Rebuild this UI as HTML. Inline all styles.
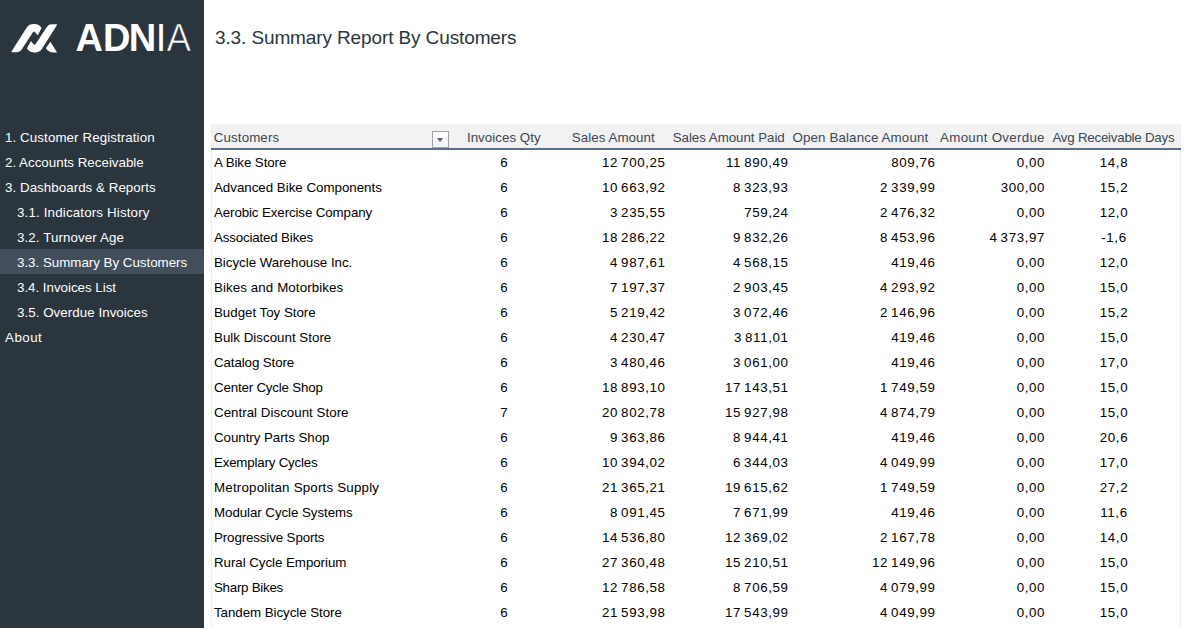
<!DOCTYPE html>
<html lang="en"><head><meta charset="utf-8"><title>3.3. Summary Report By Customers</title>
<style>
*{box-sizing:border-box;margin:0;padding:0}
html,body{width:1192px;height:633px;overflow:hidden;background:#fff}
body{position:relative;font-family:"Liberation Sans",sans-serif;font-size:13.33px;color:#000}
#side{position:absolute;left:0;top:0;width:204px;height:628px;background:#2a353e}
#logo{position:absolute;left:0;top:0;width:204px;height:80px}
.nav{position:absolute;left:0;width:204px;height:25px;line-height:25px;color:#fff;white-space:nowrap}
.nav.l0{padding-left:5px}
.nav.l1{padding-left:17px}
.selbg{position:absolute;left:0;width:204px;height:25px;background:#424e5b}
#title{position:absolute;left:215px;top:25px;font-size:19px;line-height:26px;color:#2a353e;white-space:nowrap}
#tbl{position:absolute;left:211px;top:124px;width:970px;height:504px;border-left:1px solid #eceef1;border-right:1px solid #eef0f2}
#hd{position:absolute;left:-1px;top:0;width:970px;height:26px;background:#f2f2f2;border-bottom:2px solid #5b6e8b}
.r{position:absolute;left:-1px;width:970px;height:25px}
.c{position:absolute;top:0;height:25px;line-height:25px;white-space:nowrap}
.hc{top:1px;color:#3b4656}
.c0{left:3px}
.c1{left:256px;width:74px;text-align:center}
.n{text-align:right;letter-spacing:.6px;word-spacing:-1.3px}
.c2{right:515.5px}
.c3{right:392.5px}
.c4{right:245.5px}
.c5{right:136px}
.c6{left:837px;width:132px;text-align:center;letter-spacing:.6px}
#dd{position:absolute;left:220px;top:7px;width:17px;height:17px;border:1px solid #a2a2a2;background:linear-gradient(#fff,#eef1f6)}
#dd:after{content:"";position:absolute;left:4px;top:6px;border-left:3.5px solid transparent;border-right:3.5px solid transparent;border-top:4px solid #606060}
</style></head>
<body>
<div id="side">
<svg id="logo" viewBox="0 0 204 80" width="204" height="80">
<g fill="#fff">
<path d="M11.6 51.3 L26.75 27.4 A8 6 0 0 1 41.6 28.1 L37.7 35.5 L35 32.2 Q34.3 31.1 33.1 32.1 L22.5 48.3 C21.3 50.2 19.8 52.2 17 52.2 L12.6 52.2 Q11 52.2 11.6 51.3 Z"/>
<path d="M11.6 51.3 L26.75 27.4 A8 6 0 0 1 41.6 28.1 L37.7 35.5 L35 32.2 Q34.3 31.1 33.1 32.1 L22.5 48.3 C21.3 50.2 19.8 52.2 17 52.2 L12.6 52.2 Q11 52.2 11.6 51.3 Z" transform="rotate(180 34.3 38.2)"/>
<path d="M50.4 41.8 L56.7 51.7 C57.1 52.4 56.6 52.6 56 52.6 L52.5 52.6 C49.5 52.4 47 50.5 46 48.1 Z"/>
</g>
<text style="font-family:'Liberation Sans',sans-serif;font-weight:700;font-size:38px" fill="#fff" y="51.3" x="75.6 103 128.7">ADN</text>
<text style="font-family:'Liberation Sans',sans-serif;font-weight:400;font-size:38px" fill="#fff" y="51.3"><tspan x="155.8">I</tspan><tspan x="166.6" textLength="24.6" lengthAdjust="spacingAndGlyphs" stroke="#2a353e" stroke-width="0.7">A</tspan></text>
</svg>

<div class="nav l0" style="top:125px;letter-spacing:0.095px">1. Customer Registration</div>
<div class="nav l0" style="top:150px;letter-spacing:0.01px">2. Accounts Receivable</div>
<div class="nav l0" style="top:175px;letter-spacing:0.047px">3. Dashboards &amp; Reports</div>
<div class="nav l1" style="top:200px;letter-spacing:0.162px">3.1. Indicators History</div>
<div class="nav l1" style="top:225px;letter-spacing:0.106px">3.2. Turnover Age</div>
<div class="selbg" style="top:249px"></div>
<div class="nav l1" style="top:250px;letter-spacing:-0.007px">3.3. Summary By Customers</div>
<div class="nav l1" style="top:275px;letter-spacing:-0.017px">3.4. Invoices List</div>
<div class="nav l1" style="top:300px;letter-spacing:0.051px">3.5. Overdue Invoices</div>
<div class="nav l0" style="top:325px;letter-spacing:0.498px">About</div>
</div>
<div id="title" style="letter-spacing:-0.117px">3.3. Summary Report By Customers</div>
<div id="tbl">
<div id="hd"></div><div id="dd"></div>
<div class="c hc" style="left:1.8px;letter-spacing:0.107px">Customers</div>
<div class="c hc" style="left:254.9px;letter-spacing:0.038px">Invoices Qty</div>
<div class="c hc" style="left:359.8px;letter-spacing:0.062px">Sales Amount</div>
<div class="c hc" style="left:460.7px;letter-spacing:-0.037px">Sales Amount Paid</div>
<div class="c hc" style="left:580.5px;letter-spacing:0.128px">Open Balance Amount</div>
<div class="c hc" style="left:728.1px;letter-spacing:0.281px">Amount Overdue</div>
<div class="c hc" style="left:840.4px;letter-spacing:-0.234px">Avg Receivable Days</div>
<div class="r" style="top:26px"><div class="c c0" style="letter-spacing:-0.093px">A Bike Store</div><div class="c c1">6</div><div class="c n c2">12 700,25</div><div class="c n c3">11 890,49</div><div class="c n c4">809,76</div><div class="c n c5">0,00</div><div class="c c6">14,8</div></div>
<div class="r" style="top:51px"><div class="c c0" style="letter-spacing:-0.015px">Advanced Bike Components</div><div class="c c1">6</div><div class="c n c2">10 663,92</div><div class="c n c3">8 323,93</div><div class="c n c4">2 339,99</div><div class="c n c5">300,00</div><div class="c c6">15,2</div></div>
<div class="r" style="top:76px"><div class="c c0" style="letter-spacing:-0.112px">Aerobic Exercise Company</div><div class="c c1">6</div><div class="c n c2">3 235,55</div><div class="c n c3">759,24</div><div class="c n c4">2 476,32</div><div class="c n c5">0,00</div><div class="c c6">12,0</div></div>
<div class="r" style="top:101px"><div class="c c0" style="letter-spacing:-0.162px">Associated Bikes</div><div class="c c1">6</div><div class="c n c2">18 286,22</div><div class="c n c3">9 832,26</div><div class="c n c4">8 453,96</div><div class="c n c5">4 373,97</div><div class="c c6">-1,6</div></div>
<div class="r" style="top:126px"><div class="c c0" style="letter-spacing:-0.021px">Bicycle Warehouse Inc.</div><div class="c c1">6</div><div class="c n c2">4 987,61</div><div class="c n c3">4 568,15</div><div class="c n c4">419,46</div><div class="c n c5">0,00</div><div class="c c6">12,0</div></div>
<div class="r" style="top:151px"><div class="c c0" style="letter-spacing:0.093px">Bikes and Motorbikes</div><div class="c c1">6</div><div class="c n c2">7 197,37</div><div class="c n c3">2 903,45</div><div class="c n c4">4 293,92</div><div class="c n c5">0,00</div><div class="c c6">15,0</div></div>
<div class="r" style="top:176px"><div class="c c0" style="letter-spacing:-0.021px">Budget Toy Store</div><div class="c c1">6</div><div class="c n c2">5 219,42</div><div class="c n c3">3 072,46</div><div class="c n c4">2 146,96</div><div class="c n c5">0,00</div><div class="c c6">15,2</div></div>
<div class="r" style="top:201px"><div class="c c0" style="letter-spacing:0.011px">Bulk Discount Store</div><div class="c c1">6</div><div class="c n c2">4 230,47</div><div class="c n c3">3 811,01</div><div class="c n c4">419,46</div><div class="c n c5">0,00</div><div class="c c6">15,0</div></div>
<div class="r" style="top:226px"><div class="c c0" style="letter-spacing:-0.104px">Catalog Store</div><div class="c c1">6</div><div class="c n c2">3 480,46</div><div class="c n c3">3 061,00</div><div class="c n c4">419,46</div><div class="c n c5">0,00</div><div class="c c6">17,0</div></div>
<div class="r" style="top:251px"><div class="c c0" style="letter-spacing:-0.185px">Center Cycle Shop</div><div class="c c1">6</div><div class="c n c2">18 893,10</div><div class="c n c3">17 143,51</div><div class="c n c4">1 749,59</div><div class="c n c5">0,00</div><div class="c c6">15,0</div></div>
<div class="r" style="top:276px"><div class="c c0" style="letter-spacing:0.02px">Central Discount Store</div><div class="c c1">7</div><div class="c n c2">20 802,78</div><div class="c n c3">15 927,98</div><div class="c n c4">4 874,79</div><div class="c n c5">0,00</div><div class="c c6">15,0</div></div>
<div class="r" style="top:301px"><div class="c c0" style="letter-spacing:-0.049px">Country Parts Shop</div><div class="c c1">6</div><div class="c n c2">9 363,86</div><div class="c n c3">8 944,41</div><div class="c n c4">419,46</div><div class="c n c5">0,00</div><div class="c c6">20,6</div></div>
<div class="r" style="top:326px"><div class="c c0" style="letter-spacing:-0.203px">Exemplary Cycles</div><div class="c c1">6</div><div class="c n c2">10 394,02</div><div class="c n c3">6 344,03</div><div class="c n c4">4 049,99</div><div class="c n c5">0,00</div><div class="c c6">17,0</div></div>
<div class="r" style="top:351px"><div class="c c0" style="letter-spacing:0.199px">Metropolitan Sports Supply</div><div class="c c1">6</div><div class="c n c2">21 365,21</div><div class="c n c3">19 615,62</div><div class="c n c4">1 749,59</div><div class="c n c5">0,00</div><div class="c c6">27,2</div></div>
<div class="r" style="top:376px"><div class="c c0" style="letter-spacing:-0.064px">Modular Cycle Systems</div><div class="c c1">6</div><div class="c n c2">8 091,45</div><div class="c n c3">7 671,99</div><div class="c n c4">419,46</div><div class="c n c5">0,00</div><div class="c c6">11,6</div></div>
<div class="r" style="top:401px"><div class="c c0" style="letter-spacing:-0.121px">Progressive Sports</div><div class="c c1">6</div><div class="c n c2">14 536,80</div><div class="c n c3">12 369,02</div><div class="c n c4">2 167,78</div><div class="c n c5">0,00</div><div class="c c6">14,0</div></div>
<div class="r" style="top:426px"><div class="c c0" style="letter-spacing:-0.049px">Rural Cycle Emporium</div><div class="c c1">6</div><div class="c n c2">27 360,48</div><div class="c n c3">15 210,51</div><div class="c n c4">12 149,96</div><div class="c n c5">0,00</div><div class="c c6">15,0</div></div>
<div class="r" style="top:451px"><div class="c c0" style="letter-spacing:-0.265px">Sharp Bikes</div><div class="c c1">6</div><div class="c n c2">12 786,58</div><div class="c n c3">8 706,59</div><div class="c n c4">4 079,99</div><div class="c n c5">0,00</div><div class="c c6">15,0</div></div>
<div class="r" style="top:476px"><div class="c c0" style="letter-spacing:-0.053px">Tandem Bicycle Store</div><div class="c c1">6</div><div class="c n c2">21 593,98</div><div class="c n c3">17 543,99</div><div class="c n c4">4 049,99</div><div class="c n c5">0,00</div><div class="c c6">15,0</div></div>
</div>
</body></html>
